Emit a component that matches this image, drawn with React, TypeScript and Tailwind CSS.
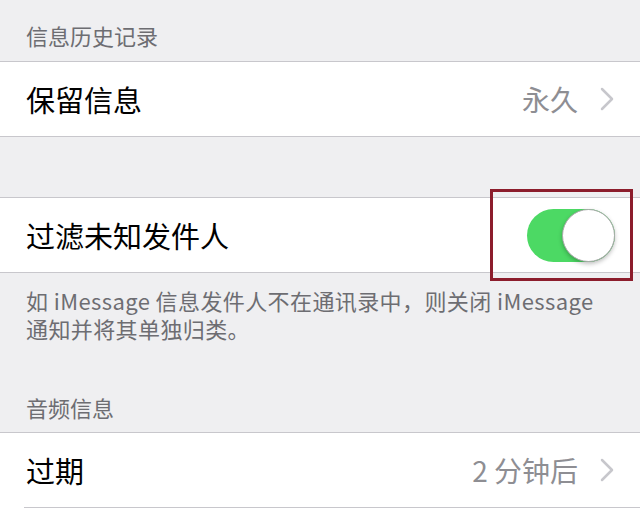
import React from 'react';

const font = { fontFamily: '"Noto Sans CJK SC", "Noto Sans", sans-serif' };

const Chevron = () => (
  <svg width="14" height="24" viewBox="0 0 14 24" className="ml-[22px]">
    <polyline points="2,2 12,12 2,22" fill="none" stroke="#c7c7cc" strokeWidth="2.5" strokeLinecap="round" strokeLinejoin="round" />
  </svg>
);

const ValueRow = ({ label, value, inset = false }: { label: string; value: string; inset?: boolean }) => (
  <div className={`bg-white h-[76px] border-t border-[#c8c7cc] ${inset ? '' : 'border-b'}`}>
    <div className={`h-full flex items-center justify-between pr-[26px] ${inset ? 'ml-[24px] pl-[2px] border-b border-[#c8c7cc]' : 'pl-[26px]'}`}>
      <span className="text-[29px] text-black leading-none">{label}</span>
      <div className="flex items-center">
        <span className="text-[28px] text-[#8e8e93] leading-none">{value}</span>
        <Chevron />
      </div>
    </div>
  </div>
);

export default function App() {
  return (
    <div className="w-[640px] h-[513px] overflow-hidden bg-[#efeff1]" style={font}>
      <div className="h-[61px] flex items-end pb-[12px] pl-[26px]">
        <span className="text-[22px] leading-[28px] text-[#6d6d72]">信息历史记录</span>
      </div>
      <ValueRow label="保留信息" value="永久" />

      <div className="h-[60px]" />

      <div className="relative bg-white h-[76px] border-y border-[#c8c7cc] flex items-center justify-between pl-[26px] pr-[25px]">
        <span className="text-[29px] text-black leading-none">过滤未知发件人</span>
        <div className="relative w-[88px] h-[53px] rounded-full bg-[#4cd964]">
          <div className="absolute right-0 top-0 w-[53px] h-[53px] rounded-full bg-white border-[1.5px] border-[#a8a8a8] shadow-[0_2px_4px_rgba(0,0,0,0.25)]" />
        </div>
        <div className="absolute right-[7px] top-[-9px] w-[143px] h-[92px] border-[3px] border-[#8c1d2c]" />
      </div>

      <div className="pt-[16px] pl-[26px] pr-[10px] flex flex-col gap-[6px] text-[22px] leading-[22px] tracking-[0.4px] text-[#6d6d72] whitespace-nowrap">
        <div>如 iMessage 信息发件人不在通讯录中，则关闭 iMessage</div>
        <div>通知并将其单独归类。</div>
      </div>

      <div className="h-[93px] flex items-end pb-[11px] pl-[26px]">
        <span className="text-[22px] leading-[28px] text-[#6d6d72]">音频信息</span>
      </div>
      <ValueRow label="过期" value="2 分钟后" inset />
      <div className="bg-white h-[10px]" />
    </div>
  );
}
